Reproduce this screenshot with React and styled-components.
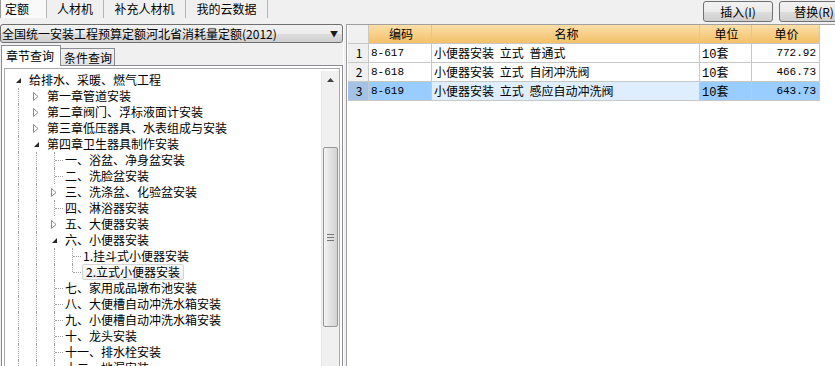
import React from "react";
import styled, { createGlobalStyle } from "styled-components";

const GlobalStyle = createGlobalStyle`
  html, body {
    margin: 0;
    padding: 0;
    background: #f0f0f0;
    overflow: hidden;
  }
  body {
    font-family: "Noto Sans CJK SC", "Liberation Sans", sans-serif;
    font-size: 12px;
    color: #000;
  }
`;

const topTabs = [
  { label: "定额", width: 47, active: true },
  { label: "人材机", width: 57 },
  { label: "补充人材机", width: 82 },
  { label: "我的云数据", width: 82 },
];

const tree = [
  { level: 0, kind: "open", text: "给排水、采暖、燃气工程" },
  { level: 1, kind: "closed", text: "第一章管道安装" },
  { level: 1, kind: "closed", text: "第二章阀门、浮标液面计安装" },
  { level: 1, kind: "closed", text: "第三章低压器具、水表组成与安装" },
  { level: 1, kind: "open", text: "第四章卫生器具制作安装" },
  { level: 2, kind: "leaf", text: "一、浴盆、净身盆安装" },
  { level: 2, kind: "leaf", text: "二、洗脸盆安装" },
  { level: 2, kind: "closed", text: "三、洗涤盆、化验盆安装" },
  { level: 2, kind: "leaf", text: "四、淋浴器安装" },
  { level: 2, kind: "closed", text: "五、大便器安装" },
  { level: 2, kind: "open", text: "六、小便器安装" },
  { level: 3, kind: "leaf", text: "1.挂斗式小便器安装" },
  { level: 3, kind: "leaf", text: "2.立式小便器安装", last: true, selected: true },
  { level: 2, kind: "leaf", text: "七、家用成品墩布池安装" },
  { level: 2, kind: "leaf", text: "八、大便槽自动冲洗水箱安装" },
  { level: 2, kind: "leaf", text: "九、小便槽自动冲洗水箱安装" },
  { level: 2, kind: "leaf", text: "十、龙头安装" },
  { level: 2, kind: "leaf", text: "十一、排水栓安装" },
  { level: 2, kind: "leaf", text: "十二、地漏安装" },
];

const rows = [
  { no: 1, code: "8-617", name: "小便器安装 立式 普通式", price: "772.92" },
  { no: 2, code: "8-618", name: "小便器安装 立式 自闭冲洗阀", price: "466.73" },
  { no: 3, code: "8-619", name: "小便器安装 立式 感应自动冲洗阀", price: "643.73", selected: true },
];

const OpenArrow = () => (
  <svg width="7" height="7" viewBox="0 0 7 7">
    <path d="M6 1 L6 6 L1 6 Z" fill="#262626" />
  </svg>
);

const ClosedArrow = () => (
  <svg width="6" height="9" viewBox="0 0 6 9">
    <path d="M0.5 0.5 L5 4.5 L0.5 8.5 Z" fill="#fff" stroke="#8a8a8a" strokeWidth="1" />
  </svg>
);

const App = () => {
  return (
    <Page>
      <GlobalStyle />
      <TopBar>
        {topTabs.map((t) => (
          <TopTab key={t.label} $width={t.width} $active={t.active}>
            {t.label}
          </TopTab>
        ))}
        <Buttons>
          <Button>插入(I)</Button>
          <Button>替换(R)</Button>
        </Buttons>
      </TopBar>
      <Body>
        <LeftPanel>
          <Combo>
            <ComboText>全国统一安装工程预算定额河北省消耗量定额(2012)</ComboText>
            <ComboArrow>▼</ComboArrow>
          </Combo>
          <SubTabs>
            <SubTab $active>章节查询</SubTab>
            <SubTab>条件查询</SubTab>
          </SubTabs>
          <TabBody>
            <TreeFrame>
              <TreeList>
                {tree.map((n, i) => (
                  <TreeRow key={i}>
                    {Array.from({ length: n.level }).map((_, k) => (
                      <Slot key={k} $line />
                    ))}
                    <Slot $leaf={n.kind === "leaf"} $last={n.last}>
                      {n.kind === "open" && <OpenArrow />}
                      {n.kind === "closed" && <ClosedArrow />}
                    </Slot>
                    <NodeText $selected={n.selected}>{n.text}</NodeText>
                  </TreeRow>
                ))}
              </TreeList>
              <ScrollBar>
                <ScrollUp>
                  <svg width="7" height="4" viewBox="0 0 7 4">
                    <path d="M0 4 L3.5 0 L7 4 Z" fill="#404040" />
                  </svg>
                </ScrollUp>
                <Thumb>
                  <Grip />
                </Thumb>
              </ScrollBar>
            </TreeFrame>
          </TabBody>
        </LeftPanel>
        <Splitter />
        <RightPanel>
          <GridRow>
            <Cell $num $head />
            <Cell $head $center>编码</Cell>
            <Cell $head $center>名称</Cell>
            <Cell $head $center>单位</Cell>
            <Cell $head $center>单价</Cell>
          </GridRow>
          {rows.map((r) => (
            <GridRow key={r.no}>
              <Cell $num $sel={r.selected} $tone="num">{r.no}</Cell>
              <Cell $mono $sel={r.selected} $tone="strong">{r.code}</Cell>
              <Cell $spaced $sel={r.selected} $tone="light">{r.name}</Cell>
              <Cell $sel={r.selected} $tone="strong">
                <Mono>10</Mono>套
              </Cell>
              <Cell $mono $right $sel={r.selected} $tone="strong">{r.price}</Cell>
            </GridRow>
          ))}
        </RightPanel>
      </Body>
    </Page>
  );
};

const Page = styled.div`
  width: 835px;
  height: 366px;
  overflow: hidden;
  display: flex;
  flex-direction: column;
`;

const TopBar = styled.div`
  height: 24px;
  display: flex;
  align-items: flex-start;
  flex-shrink: 0;
`;

const TopTab = styled.div`
  width: ${(p) => p.$width}px;
  height: 18px;
  line-height: 18px;
  box-sizing: border-box;
  text-align: ${(p) => (p.$active ? "left" : "center")};
  padding-left: ${(p) => (p.$active ? "4px" : "0")};
  border-right: 1px solid #b4b4b4;
  border-left: ${(p) => (p.$active ? "1px solid #9a9a9a" : "none")};
  background: ${(p) => (p.$active ? "#f9f9f9" : "transparent")};
`;

const Buttons = styled.div`
  margin-left: auto;
  margin-right: -14px;
  display: flex;
  gap: 6px;
  padding-top: 1px;
`;

const Button = styled.div`
  width: 70px;
  height: 21px;
  box-sizing: border-box;
  border: 1px solid #707070;
  border-radius: 3px;
  background: linear-gradient(#f2f2f2 0%, #ebebeb 50%, #dddddd 51%, #cfcfcf 100%);
  text-align: center;
  line-height: 19px;
`;

const Body = styled.div`
  flex: 1;
  display: flex;
  min-height: 0;
`;

const LeftPanel = styled.div`
  width: 343px;
  display: flex;
  flex-direction: column;
  flex-shrink: 0;
`;

const Combo = styled.div`
  height: 19px;
  box-sizing: border-box;
  border: 1px solid #707070;
  border-radius: 3px;
  background: linear-gradient(#f2f2f2 0%, #ebebeb 50%, #dddddd 51%, #cfcfcf 100%);
  display: flex;
  align-items: center;
  padding: 0 4px 0 1px;
`;

const ComboText = styled.div`
  flex: 1;
  line-height: 17px;
  white-space: nowrap;
`;

const ComboArrow = styled.div`
  font-size: 8px;
  color: #1a1a1a;
`;

const SubTabs = styled.div`
  margin-top: 2px;
  height: 21px;
  display: flex;
  align-items: flex-end;
  padding-left: 1px;
`;

const SubTab = styled.div`
  height: ${(p) => (p.$active ? "21px" : "18px")};
  box-sizing: border-box;
  border: 1px solid #898c95;
  border-bottom: ${(p) => (p.$active ? "none" : "1px solid #898c95")};
  border-left: ${(p) => (p.$active ? "1px solid #898c95" : "none")};
  background: ${(p) => (p.$active ? "#fff" : "linear-gradient(#f2f2f2, #e2e2e2)")};
  padding: 0 ${(p) => (p.$active ? "6px 0 4px" : "2px 0 3px")};
  line-height: ${(p) => (p.$active ? "19px" : "17px")};
  position: relative;
  z-index: ${(p) => (p.$active ? 1 : 0)};
`;

const TabBody = styled.div`
  flex: 1;
  min-height: 0;
  margin-top: -1px;
  margin-left: 1px;
  border: 1px solid #898c95;
  border-bottom: none;
  background: #fff;
  padding: 2px 2px 0 2px;
  display: flex;
`;

const TreeFrame = styled.div`
  flex: 1;
  border: 1px solid #a9a9a9;
  border-bottom: none;
  display: flex;
  overflow: hidden;
`;

const TreeList = styled.div`
  flex: 1;
  padding: 3px 0 0 4px;
  overflow: hidden;
`;

const TreeRow = styled.div`
  height: 16px;
  display: flex;
  align-items: center;
  white-space: nowrap;
`;

const Slot = styled.div`
  width: 18px;
  height: 16px;
  flex-shrink: 0;
  position: relative;
  display: flex;
  align-items: center;
  justify-content: center;
  &::before {
    content: "";
    display: ${(p) => (p.$line || p.$leaf ? "block" : "none")};
    position: absolute;
    left: 9px;
    top: 0;
    height: ${(p) => (p.$last ? "8px" : "16px")};
    border-left: 1px dotted #a0a0a0;
  }
  &::after {
    content: "";
    display: ${(p) => (p.$leaf ? "block" : "none")};
    position: absolute;
    left: 10px;
    top: 8px;
    width: 8px;
    border-top: 1px dotted #a0a0a0;
  }
  svg {
    position: relative;
    z-index: 1;
  }
`;

const NodeText = styled.div`
  line-height: 14px;
  padding: ${(p) => (p.$selected ? "0 3px" : "0 1px")};
  margin-left: ${(p) => (p.$selected ? "1px" : "0")};
  border: 1px solid ${(p) => (p.$selected ? "#d4d4d4" : "transparent")};
  border-radius: 2px;
  background: ${(p) => (p.$selected ? "linear-gradient(#fbfbfb, #efefef)" : "transparent")};
`;

const ScrollBar = styled.div`
  width: 17px;
  margin-top: 2px;
  background: #f0f0f0;
  border-left: 1px solid #e6e6e6;
  display: flex;
  flex-direction: column;
  align-items: center;
  flex-shrink: 0;
`;

const ScrollUp = styled.div`
  height: 17px;
  display: flex;
  align-items: center;
  justify-content: center;
`;

const Thumb = styled.div`
  margin-top: 59px;
  width: 15px;
  height: 180px;
  box-sizing: border-box;
  border: 1px solid #979797;
  border-radius: 2px;
  background: linear-gradient(90deg, #f3f3f3, #e2e2e2 50%, #d3d3d3);
  display: flex;
  align-items: center;
  justify-content: center;
`;

const Grip = styled.div`
  width: 7px;
  height: 5px;
  border-top: 1px solid #777;
  border-bottom: 1px solid #777;
  position: relative;
  &::after {
    content: "";
    position: absolute;
    left: 0;
    right: 0;
    top: 2px;
    border-top: 1px solid #777;
  }
`;

const Splitter = styled.div`
  width: 3px;
  flex-shrink: 0;
  border-left: 1px solid #fdfdfd;
  box-sizing: border-box;
`;

const RightPanel = styled.div`
  flex: 1;
  background: #fff;
  border-left: 1px solid #a0a0a0;
  border-top: 1px solid #a0a0a0;
  padding-left: 1px;
`;

const GridRow = styled.div`
  display: grid;
  grid-template-columns: 21px 63px 268px 52px 68px;
  height: 19px;
`;

const toneColor = {
  num: "#a3c2e6",
  strong: "#99ccff",
  light: "#deeefe",
};

const Cell = styled.div`
  box-sizing: border-box;
  border-right: 1px solid #c8c8c8;
  border-bottom: 1px solid #c8c8c8;
  line-height: 18px;
  white-space: nowrap;
  overflow: hidden;
  word-spacing: ${(p) => (p.$spaced ? "3px" : "0")};
  padding: ${(p) => (p.$right ? "0 3px 0 0" : "0 0 0 2px")};
  text-align: ${(p) => (p.$right ? "right" : p.$center || p.$num ? "center" : "left")};
  font-family: ${(p) =>
    p.$mono ? `"Liberation Mono", monospace` : `"Noto Sans CJK SC", "Liberation Sans", sans-serif`};
  font-size: ${(p) => (p.$mono ? "11px" : "12px")};
  background: ${(p) =>
    p.$head && !p.$num
      ? "linear-gradient(#fbdea8, #f3c168)"
      : p.$sel
      ? toneColor[p.$tone]
      : p.$num
      ? "#f0f0f0"
      : "#fff"};
`;

const Mono = styled.span`
  font-family: "Liberation Mono", monospace;
  font-size: 12px;
`;

export default App;
